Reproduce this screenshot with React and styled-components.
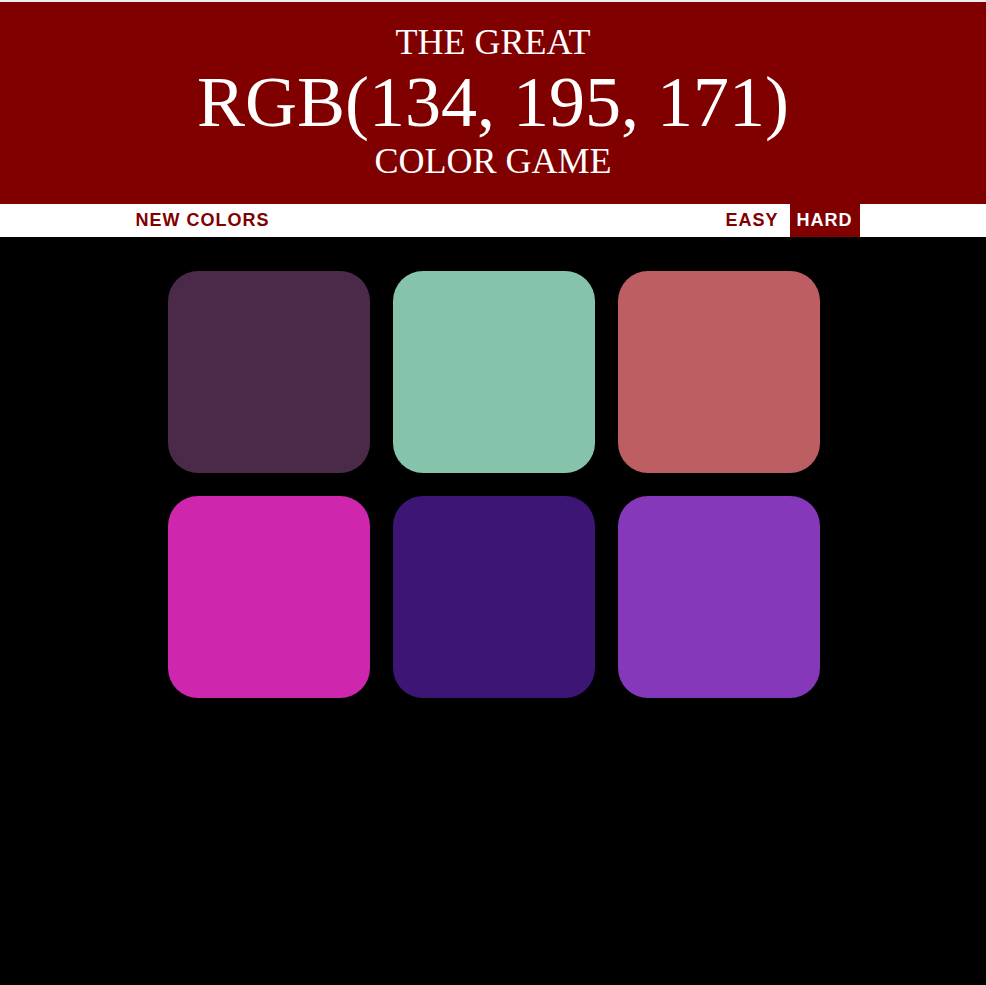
import React, { useState } from "react";
import styled, { createGlobalStyle } from "styled-components";

const Global = createGlobalStyle`
  html, body { margin: 0; padding: 0; background: #000; }
  body { font-family: "Liberation Sans", Arial, sans-serif; }
`;

const Header = styled.h1`
  margin: 0;
  border-top: 2px solid #ececec;
  background: #800000;
  color: #fff;
  text-align: center;
  font-family: "Liberation Serif", "Times New Roman", serif;
  font-weight: normal;
  font-size: 36px;
  line-height: 1.1;
  text-transform: uppercase;
  padding: 21px 0 23px;
`;

const Line = styled.span`
  display: block;
  font-size: ${(p) => (p.$big ? "72px" : "36px")};
`;

const Stripe = styled.div`
  background: #fff;
  height: 33px;
  display: flex;
  justify-content: center;
  padding-left: 2px;
`;

const StripeInner = styled.div`
  width: 731px;
  display: flex;
  align-items: stretch;
`;

const Spacer = styled.div`
  flex: 1;
`;

const Modes = styled.div`
  display: flex;
  gap: 4px;
`;

const NavButton = styled.button`
  border: none;
  outline: none;
  margin: 0;
  padding: 0 7px;
  background: ${(p) => (p.$selected ? "#800000" : "#fff")};
  color: ${(p) => (p.$selected ? "#fff" : "#800000")};
  font-family: "Liberation Sans", Arial, sans-serif;
  font-weight: bold;
  font-size: 18px;
  letter-spacing: 1px;
  text-transform: uppercase;
  cursor: pointer;
`;

const Board = styled.div`
  display: grid;
  grid-template-columns: repeat(3, 202px);
  grid-auto-rows: 202px;
  gap: 23px;
  justify-content: center;
  padding: 34px 0 0 2px;
`;

const Square = styled.div`
  border-radius: 30px;
  background: ${(p) => p.$color};
`;

const colors = [
  "rgb(75, 41, 73)",
  "rgb(134, 195, 171)",
  "rgb(188, 94, 98)",
  "rgb(206, 39, 174)",
  "rgb(61, 21, 117)",
  "rgb(133, 56, 185)",
];

export default function App() {
  const [mode, setMode] = useState("hard");
  return (
    <>
      <Global />
      <Header>
        <Line>The Great</Line>
        <Line $big>RGB(134, 195, 171)</Line>
        <Line>Color Game</Line>
      </Header>
      <Stripe>
        <StripeInner>
          <NavButton>New Colors</NavButton>
          <Spacer />
          <Modes>
            <NavButton $selected={mode === "easy"} onClick={() => setMode("easy")}>Easy</NavButton>
            <NavButton $selected={mode === "hard"} onClick={() => setMode("hard")}>Hard</NavButton>
          </Modes>
        </StripeInner>
      </Stripe>
      <Board>
        {colors.map((c, i) => (
          <Square key={i} $color={c} />
        ))}
      </Board>
    </>
  );
}
